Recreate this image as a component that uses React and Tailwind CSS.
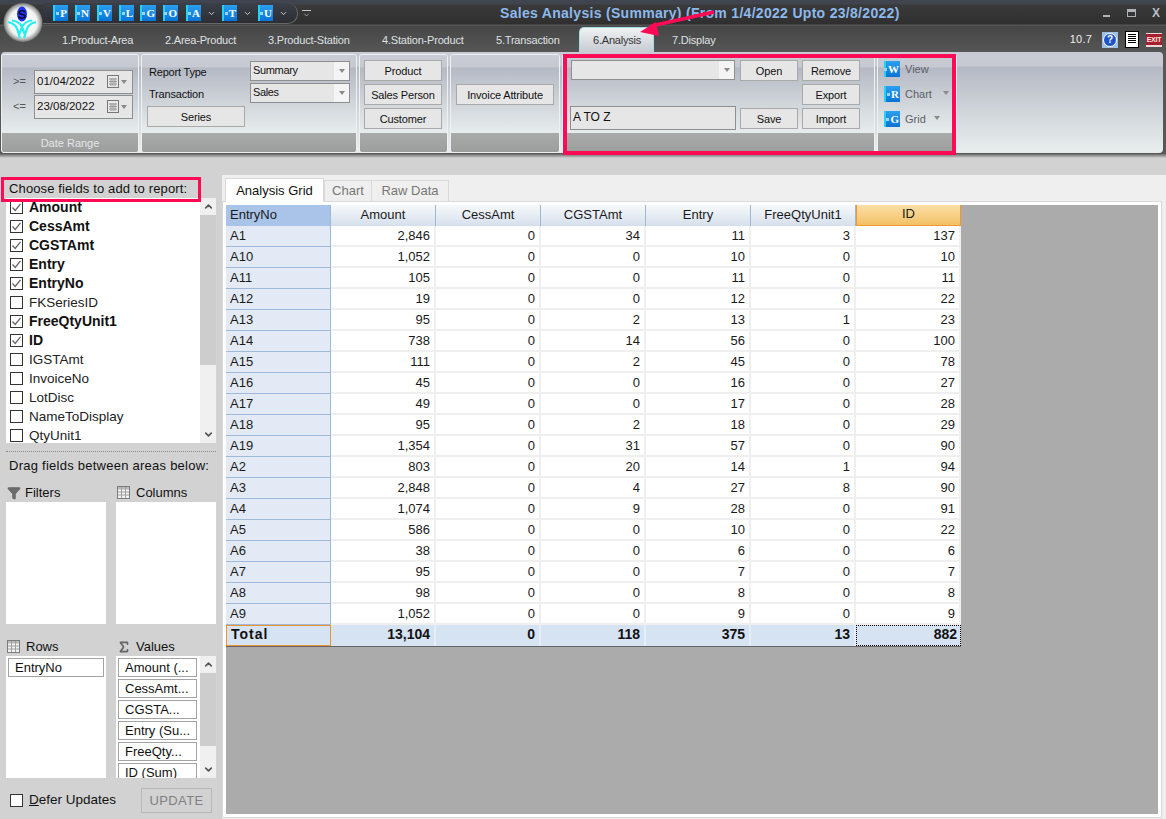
import React from 'react';
import { ChevronUp, ChevronDown, Filter, Sigma } from 'lucide-react';

const rows = [
  ['A1','2,846','0','34','11','3','137'],['A10','1,052','0','0','10','0','10'],['A11','105','0','0','11','0','11'],
  ['A12','19','0','0','12','0','22'],['A13','95','0','2','13','1','23'],['A14','738','0','14','56','0','100'],
  ['A15','111','0','2','45','0','78'],['A16','45','0','0','16','0','27'],['A17','49','0','0','17','0','28'],
  ['A18','95','0','2','18','0','29'],['A19','1,354','0','31','57','0','90'],['A2','803','0','20','14','1','94'],
  ['A3','2,848','0','4','27','8','90'],['A4','1,074','0','9','28','0','91'],['A5','586','0','0','10','0','22'],
  ['A6','38','0','0','6','0','6'],['A7','95','0','0','7','0','7'],['A8','98','0','0','8','0','8'],['A9','1,052','0','0','9','0','9'],
];
const heads = ['Amount','CessAmt','CGSTAmt','Entry','FreeQtyUnit1'];
const totals = ['13,104','0','118','375','13'];
const fields = [
  ['Amount',1],['CessAmt',1],['CGSTAmt',1],['Entry',1],['EntryNo',1],['FKSeriesID',0],['FreeQtyUnit1',1],['ID',1],
  ['IGSTAmt',0],['InvoiceNo',0],['LotDisc',0],['NameToDisplay',0],['QtyUnit1',0],
];
const values = ['Amount (...','CessAmt...','CGSTA...','Entry (Su...','FreeQty...','ID (Sum)'];

function Tile({ letter, className }) {
  return (
    <div className={"flex items-center justify-end gap-px pr-px border-l-2 border-l-[#22d3f5] bg-gradient-to-b from-[#2b9ff0] to-[#0a74d6] " + className}>
      <span className="w-[3px] h-[3px] bg-[#9ad4f8] shrink-0"></span>
      <span className="font-['Liberation_Serif',serif] font-bold text-[11px] leading-none text-white">{letter}</span>
    </div>
  );
}

function Tri({ className = '' }) {
  return <span className={"w-0 h-0 border-x-[3px] border-x-transparent border-t-[4px] border-t-[#8a8a8a] " + className}></span>;
}

function Check({ on }) {
  return (
    <span className="w-[13px] h-[13px] border border-[#333] bg-white shrink-0 flex items-center justify-center">
      {on ? <svg width="11" height="11" viewBox="0 0 11 11"><path d="M1.5 5.5 L4.2 8.5 L9.5 1.8" fill="none" stroke="#666" strokeWidth="1.3" /></svg> : null}
    </span>
  );
}

function Btn({ children, className = '' }) {
  return <div className={"h-[21px] pt-px flex items-center justify-center bg-[#e6e6e6] border border-[#a9a9a9] text-[11px] tracking-[-0.15px] text-[#111] " + className}>{children}</div>;
}

function Combo({ children, className = '' }) {
  return (
    <div className={"h-[20px] flex items-center bg-[#e6e6e6] border border-[#8f8f8f] pl-[2px] text-[11px] tracking-[-0.35px] text-[#111] " + className}>
      <span className="flex-1 pb-px">{children}</span>
      <span className="w-[15px] h-[18px] bg-[#f4f4f4] flex items-center justify-center"><Tri /></span>
    </div>
  );
}

function DateBox({ value }) {
  return (
    <div className="w-[99px] h-[24px] flex items-center bg-[#e6e6e6] border border-[#8f8f8f] pl-[2px] text-[11.5px] text-[#111]">
      <span className="flex-1 pt-px">{value}</span>
      <svg width="12" height="13" viewBox="0 0 12 13" className="mr-[2px]">
        <rect x="0.5" y="0.5" width="11" height="12" fill="#e8e8e8" stroke="#777" />
        <path d="M2 4h8M2 6.5h8M2 9h8M4 3v8M6 3v8M8 3v8" stroke="#9a9a9a" strokeWidth="1" />
      </svg>
      <Tri className="mr-[5px]" />
    </div>
  );
}

function Group({ w, caption, children, className = '' }) {
  return (
    <div className={"h-full flex flex-col shrink-0 rounded-[3px] border border-[#eef0f2] overflow-hidden " + w}>
      <div className={"flex-1 min-h-0 bg-[linear-gradient(#c9ccd4_0,#c6c9d1_12px,#b5b9c4_13px,#e7eded_78px)] " + className}>{children}</div>
      <div className="h-[19px] pt-px shrink-0 bg-gradient-to-b from-[#a9aaaa] to-[#9c9d9d] flex items-center justify-center text-[11px] text-[#e4e6e8]">{caption}</div>
    </div>
  );
}

function ViewItem({ letter, label, tri, className = '' }) {
  return (
    <div className={"flex items-center h-[16px] " + className}>
      <Tile letter={letter} className="w-[16px] h-[16px]" />
      <span className="ml-[5px] pt-px text-[11px] leading-none text-[#5c5f66]">{label}</span>
      {tri ? <Tri className={tri} /> : null}
    </div>
  );
}

function GridIcon() {
  return (
    <svg width="13" height="13" viewBox="0 0 13 13" className="shrink-0">
      <rect x="0.5" y="0.5" width="12" height="12" fill="#f2f2f2" stroke="#7d7d7d" />
      <rect x="1" y="1" width="11" height="2.5" fill="#b9b9b9" />
      <path d="M1 6h11M1 9h11M4.5 1v11M8.5 1v11" stroke="#a0a0a0" />
    </svg>
  );
}

function Cell({ children }) {
  return <div className="w-[105px] h-[21px] shrink-0 flex items-center justify-end pr-[4px] text-[13px] border-r-2 border-b-2 border-[#efefef] bg-white text-[#1a1a1a]">{children}</div>;
}

export default function App() {
  return (
    <div className="relative w-[1166px] h-[819px] overflow-hidden flex flex-col font-['Liberation_Sans',sans-serif] bg-[#d2d2d2]">
      {/* title bar */}
      <div className="h-[26px] shrink-0 flex items-center bg-[linear-gradient(#40444f_0,#40444f_4px,#3a3a3a_5px,#2f2f2f_24px,#555_25px)]">
        <div className="w-[500px] shrink-0 h-full flex items-center">
          <div className="ml-[43px] w-[255px] h-[21px] mt-[1px] rounded-r-[10px] bg-gradient-to-b from-[#3a3f49] to-[#2c2e33] border-b border-r border-[#666] flex items-center pl-[10px] gap-[7px]">
            <Tile letter="P" className="w-[15px] h-[16px]" />
            <Tile letter="N" className="w-[15px] h-[16px]" />
            <Tile letter="V" className="w-[15px] h-[16px]" />
            <Tile letter="L" className="w-[15px] h-[16px]" />
            <Tile letter="G" className="w-[16px] h-[16px] -ml-px" />
            <Tile letter="O" className="w-[15px] h-[16px]" />
            <Tile letter="A" className="w-[15px] h-[16px] ml-px" />
            <ChevronDown size={9} strokeWidth={2.5} color="#cfd3da" className="-mx-[1px]" />
            <Tile letter="T" className="w-[15px] h-[16px]" />
            <ChevronDown size={9} strokeWidth={2.5} color="#cfd3da" className="-mx-[1px]" />
            <Tile letter="U" className="w-[15px] h-[16px]" />
            <ChevronDown size={9} strokeWidth={2.5} color="#cfd3da" className="-mx-[1px]" />
          </div>
          <ChevronDown size={9} strokeWidth={2} color="#c8c8c8" className="ml-[4px] mt-[3px] border-t border-[#c8c8c8]" />
        </div>
        <div className="text-[14px] font-bold tracking-[0.3px] text-[#8db9ec] whitespace-nowrap">Sales Analysis (Summary) (From 1/4/2022 Upto 23/8/2022)</div>
        <div className="ml-auto flex items-center h-full pr-[6px] text-[#b9bec6]">
          <span className="w-[7px] h-[2px] mt-[6px] bg-[#aeb2b9]"></span>
          <span className="ml-[17px] w-[9px] h-[8px] border border-t-[3px] border-[#aeb2b9]"></span>
          <span className="ml-[16px] text-[12px] font-bold leading-none">X</span>
        </div>
      </div>

      {/* ribbon tabs */}
      <div className="h-[26px] shrink-0 flex items-end bg-gradient-to-b from-[#464646] to-[#565656] text-[11px] tracking-[-0.2px] text-[#dfe1e3]">
        <div className="ml-[62px] w-[103px] h-[25px] pt-px flex items-center">1.Product-Area</div>
        <div className="w-[103px] h-[25px] pt-px flex items-center">2.Area-Product</div>
        <div className="w-[114px] h-[25px] pt-px flex items-center">3.Product-Station</div>
        <div className="w-[114px] h-[25px] pt-px flex items-center">4.Station-Product</div>
        <div className="w-[83px] h-[25px] pt-px flex items-center">5.Transaction</div>
        <div className="w-[75px] h-[25px] pt-px flex items-center pl-[13px] rounded-t-[5px] border-x border-t border-[#9fdfe0] bg-gradient-to-b from-[#eef2f3] to-[#c8ccd3] text-[#333]">6.Analysis</div>
        <div className="ml-[18px] h-[25px] pt-px flex items-center">7.Display</div>
        <div className="ml-auto h-[25px] flex items-center pr-[4px]">
          <span className="text-[11px] tracking-[0.2px] text-[#eee]">10.7</span>
          <span className="ml-[10px] w-[16px] h-[16px] bg-[#9fc0e6] flex items-center justify-center">
            <span className="w-[14px] h-[14px] rounded-full bg-[#1e53c8] border border-white flex items-center justify-center text-[10px] font-bold leading-none text-white">?</span>
          </span>
          <span className="ml-[7px] w-[14px] h-[17px] bg-white border border-black flex flex-col gap-px pt-[2px] px-[2px]">
            <span className="h-px bg-black"></span><span className="h-px bg-black"></span><span className="h-px bg-black"></span><span className="h-px bg-black"></span><span className="h-px bg-black"></span>
          </span>
          <span className="ml-[7px] w-[16px] h-[14px] bg-[#e9d6d6] flex items-center justify-center">
            <span className="bg-[#a81e2a] text-[7px] leading-none font-bold text-[#f5e5e5] px-px py-[2px]">EXIT</span>
          </span>
        </div>
      </div>

      {/* ribbon */}
      <div className="h-[102px] shrink-0 bg-[#575757] pr-[3px] pl-[1px] pb-px">
        <div className="h-full flex items-stretch gap-[2px] pt-[2px] rounded-[4px] bg-[linear-gradient(#c9ccd4_0,#c6c9d1_14px,#b5b9c4_15px,#e7eded_98px)]">
          <Group w="w-[138px]" caption="Date Range" className="pl-[11px] pt-[14px]">
            <div className="flex items-center h-[25px]"><span className="w-[21px] text-[11px] text-[#555]">&gt;=</span><DateBox value="01/04/2022" /></div>
            <div className="flex items-center h-[25px]"><span className="w-[21px] text-[11px] text-[#555]">&lt;=</span><DateBox value="23/08/2022" /></div>
          </Group>
          <Group w="w-[216px]" caption="" className="pl-[5px] pt-[6px]">
            <div className="flex">
              <div className="w-[103px] pl-[2px] pt-px text-[11px] tracking-[-0.2px] text-[#111]">
                <div className="h-[21px] flex items-center">Report Type</div>
                <div className="h-[22px] flex items-center">Transaction</div>
              </div>
              <div className="flex flex-col gap-[2px]">
                <Combo className="w-[100px]">Summary</Combo>
                <Combo className="w-[100px]">Sales</Combo>
              </div>
            </div>
            <Btn className="w-[98px] mt-[1px]">Series</Btn>
          </Group>
          <Group w="w-[89px]" caption="" className="pl-[4px] pt-[5px] flex flex-col gap-[3px]">
            <Btn className="w-[78px]">Product</Btn>
            <Btn className="w-[78px]">Sales Person</Btn>
            <Btn className="w-[78px]">Customer</Btn>
          </Group>
          <Group w="w-[110px]" caption="" className="pl-[5px] pt-[29px]">
            <Btn className="w-[98px]">Invoice Attribute</Btn>
          </Group>
          <Group w="w-[313px]" caption="" className="pl-[7px] pt-[5px] flex gap-[4px]">
            <div className="w-[166px] flex flex-col justify-between pb-[3px]">
              <Combo className="w-[164px] ml-[1px]"></Combo>
              <div className="h-[24px] w-[166px] bg-[#e6e6e6] border border-[#8f8f8f] pl-[2px] pb-[3px] flex items-center text-[12px] text-[#111]">A TO Z</div>
            </div>
            <div className="w-[58px] flex flex-col gap-[27px]">
              <Btn>Open</Btn>
              <Btn>Save</Btn>
            </div>
            <div className="w-[58px] flex flex-col gap-[3px]">
              <Btn>Remove</Btn>
              <Btn>Export</Btn>
              <Btn>Import</Btn>
            </div>
          </Group>
          <Group w="w-[80px]" caption="" className="pl-[6px] pt-[6px] flex flex-col gap-[9px]">
            <ViewItem letter="W" label="View" />
            <ViewItem letter="R" label="Chart" tri="ml-[11px] -mt-[2px]" />
            <ViewItem letter="G" label="Grid" tri="ml-[8px] -mt-[2px]" />
          </Group>
        </div>
      </div>

      {/* shadow */}
      <div className="h-[4px] shrink-0 bg-gradient-to-b from-[#6a6a6a] to-[#d2d2d2]"></div>

      {/* body */}
      <div className="flex-1 min-h-0 flex pt-[17px]">
        {/* left panel */}
        <div className="w-[222px] shrink-0 pl-[6px] pr-[6px] flex flex-col text-[13px] text-[#111]">
          <div className="h-[23px] ml-[3px] flex items-center text-[13px] leading-none pt-[4px] tracking-[0.13px]">Choose fields to add to report:</div>
          <div className="h-[245px] shrink-0 bg-white flex overflow-hidden">
            <div className="w-[194px] pl-[4px]">
              {fields.map(([n, on]) => (
                <div key={n} className="h-[19px] flex items-center gap-[6px]">
                  <Check on={on} />
                  <span className={on ? "font-bold text-[14px]" : "pt-px text-[13.5px] text-[#222]"}>{n}</span>
                </div>
              ))}
            </div>
            <div className="w-[16px] flex flex-col bg-[#f0f0f0]">
              <div className="h-[17px] flex items-center justify-center"><ChevronUp size={11} strokeWidth={3.5} color="#555" /></div>
              <div className="h-[150px] bg-[#cdcdcd]"></div>
              <div className="flex-1 flex items-end justify-center pb-[3px]"><ChevronDown size={11} strokeWidth={3.5} color="#555" /></div>
            </div>
          </div>
          <div className="mt-[8px] border-t border-dotted border-[#8a8a8a]"></div>
          <div className="mt-[5px] ml-[3px] h-[18px] flex items-center tracking-[0.25px]">Drag fields between areas below:</div>
          <div className="mt-[8px] flex gap-[10px]">
            <div className="w-[100px]">
              <div className="h-[19px] flex items-center gap-[4px] pl-px"><Filter size={14} fill="#6b6b6b" stroke="#6b6b6b" />Filters</div>
              <div className="h-[122px] bg-white"></div>
            </div>
            <div className="w-[100px]">
              <div className="h-[19px] flex items-center gap-[6px] pl-px"><GridIcon />Columns</div>
              <div className="h-[122px] bg-white"></div>
            </div>
          </div>
          <div className="mt-[13px] flex gap-[10px]">
            <div className="w-[100px]">
              <div className="h-[19px] flex items-center gap-[6px] pl-px"><GridIcon />Rows</div>
              <div className="h-[122px] bg-white p-[2px]">
                <div className="h-[19px] border border-[#a3a3a3] flex items-center pl-[6px]">EntryNo</div>
              </div>
            </div>
            <div className="w-[100px]">
              <div className="h-[19px] flex items-center gap-[5px] pl-px"><Sigma size={14} strokeWidth={3} color="#666" />Values</div>
              <div className="h-[122px] bg-white flex overflow-hidden">
                <div className="w-[84px] pl-[2px] pt-[2px] flex flex-col gap-[2px]">
                  {values.map(v => <div key={v} className="h-[19px] w-[79px] shrink-0 border border-[#a3a3a3] flex items-center pl-[6px] whitespace-nowrap">{v}</div>)}
                </div>
                <div className="w-[16px] flex flex-col bg-[#f0f0f0]">
                  <div className="h-[17px] flex items-center justify-center"><ChevronUp size={11} strokeWidth={3.5} color="#555" /></div>
                  <div className="h-[73px] bg-[#cdcdcd]"></div>
                  <div className="flex-1 flex items-end justify-center pb-[3px]"><ChevronDown size={11} strokeWidth={3.5} color="#555" /></div>
                </div>
              </div>
            </div>
          </div>
          <div className="mt-[10px] flex items-center pl-[4px]">
            <Check on={false} />
            <span className="ml-[6px] text-[13.5px] pb-px"><span className="underline">D</span>efer Updates</span>
            <div className="ml-auto mr-[4px] w-[71px] h-[25px] border border-[#b8b8b8] flex items-center justify-center text-[#808080] tracking-[0.4px]">UPDATE</div>
          </div>
        </div>

        {/* right panel */}
        <div className="flex-1 min-w-0 bg-[#efefef] flex flex-col pr-[4px] pb-px">
          <div className="h-[26px] shrink-0 flex items-end pl-[3px] text-[13px]">
            <div className="w-[99px] h-[24px] bg-white border border-b-0 border-[#d9d9d9] flex items-center justify-center text-[#111] -mb-px relative">Analysis Grid</div>
            <div className="w-[48px] h-[21px] border border-b-0 border-[#d9d9d9] flex items-center justify-center text-[#777]">Chart</div>
            <div className="w-[77px] h-[21px] border border-b-0 border-l-0 border-[#d9d9d9] flex items-center justify-center text-[#777]">Raw Data</div>
          </div>
          <div className="flex-1 min-h-0 bg-white border border-[#d9d9d9] p-[3px]">
            <div className="h-full bg-[#ababab]">
              <div className="w-[735px] text-[13px]">
                <div className="flex h-[21px]">
                  <div className="w-[105px] flex items-center pl-[4px] pb-[2px] bg-[#a9c4e8] text-[#1a1a1a] border-r border-[#9eb6ce]">EntryNo</div>
                  {heads.map(h => <div key={h} className="w-[105px] flex items-center justify-center pb-[2px] bg-gradient-to-b from-[#f7f9fb] to-[#d5dfec] border-r border-[#9eb6ce] text-[#1a1a1a]">{h}</div>)}
                  <div className="w-[105px] flex items-center justify-center pb-[2px] bg-gradient-to-b from-[#fbdfa6] to-[#f3c164] border-x border-b border-[#f0982f] text-[#1a1a1a]">ID</div>
                </div>
                {rows.map(r => (
                  <div key={r[0]} className="flex h-[21px]">
                    <div className="w-[105px] h-[21px] flex items-center pl-[4px] bg-[#e3eaf5] border-r border-b border-[#9fb9d8] text-[#1a1a1a]">{r[0]}</div>
                    {r.slice(1).map((c, i) => <Cell key={i}>{c}</Cell>)}
                  </div>
                ))}
                <div className="flex h-[21px] box-content w-[735px] font-bold text-[14px] text-[#111] border-b border-[#666]">
                  <div className="w-[105px] h-[21px] flex items-center pl-[4px] pb-[2px] bg-[#d6e3f3] border border-[#f0922e] tracking-[1px]">Total</div>
                  {totals.map((c, i) => <div key={i} className="w-[105px] h-[21px] flex items-center justify-end pr-[4px] pb-[2px] bg-[#d6e3f3] border-r-2 border-[#e6edf6]">{c}</div>)}
                  <div className="w-[105px] h-[21px] flex items-center justify-end pr-[3px] pb-[2px] bg-[#d6e3f3] border border-dotted border-black">882</div>
                </div>
              </div>
            </div>
          </div>
        </div>
      </div>

      {/* logo */}
      <svg width="46" height="46" viewBox="0 0 46 46" className="absolute left-0 top-0">
        <defs>
          <radialGradient id="lg" cx="50%" cy="50%" r="50%">
            <stop offset="0%" stopColor="#ffffff" />
            <stop offset="72%" stopColor="#f2f4f4" />
            <stop offset="90%" stopColor="#a6a8a8" />
            <stop offset="100%" stopColor="#6e6e6e" />
          </radialGradient>
        </defs>
        <circle cx="23" cy="22.5" r="19.5" fill="url(#lg)" />
        <ellipse cx="22" cy="14" rx="5" ry="7.5" fill="#1f36e6" />
        <text x="22" y="18.5" textAnchor="middle" fontSize="13" fontWeight="700" fontFamily="Liberation Sans" fill="#05053c">S</text>
        <path d="M8 22 C14 23 17 26 19 35 L22 27 L25 35 C27 26 30 23 36 22 M12 20.5 C17 21 20 23 22 27 C24 23 27 21 32 20.5 M19 35 L20 38 M25 35 L24 38" fill="none" stroke="#22f0ee" strokeWidth="2.2" />
      </svg>

      {/* annotations */}
      <div className="absolute left-[1px] top-[177px] w-[200px] h-[25px] border-[3px] border-[#ff0a54]"></div>
      <div className="absolute left-[563px] top-[54px] w-[393px] h-[101px] border-[4px] border-[#ff0a54]"></div>
      <svg width="90" height="40" viewBox="0 0 90 40" className="absolute left-[635px] top-[4px]">
        <path d="M79 8 L16 22" stroke="#ff0a54" strokeWidth="3.5" fill="none" />
        <path d="M5 28 L21 18 L24 32 Z" fill="#ff0a54" />
      </svg>
    </div>
  );
}
